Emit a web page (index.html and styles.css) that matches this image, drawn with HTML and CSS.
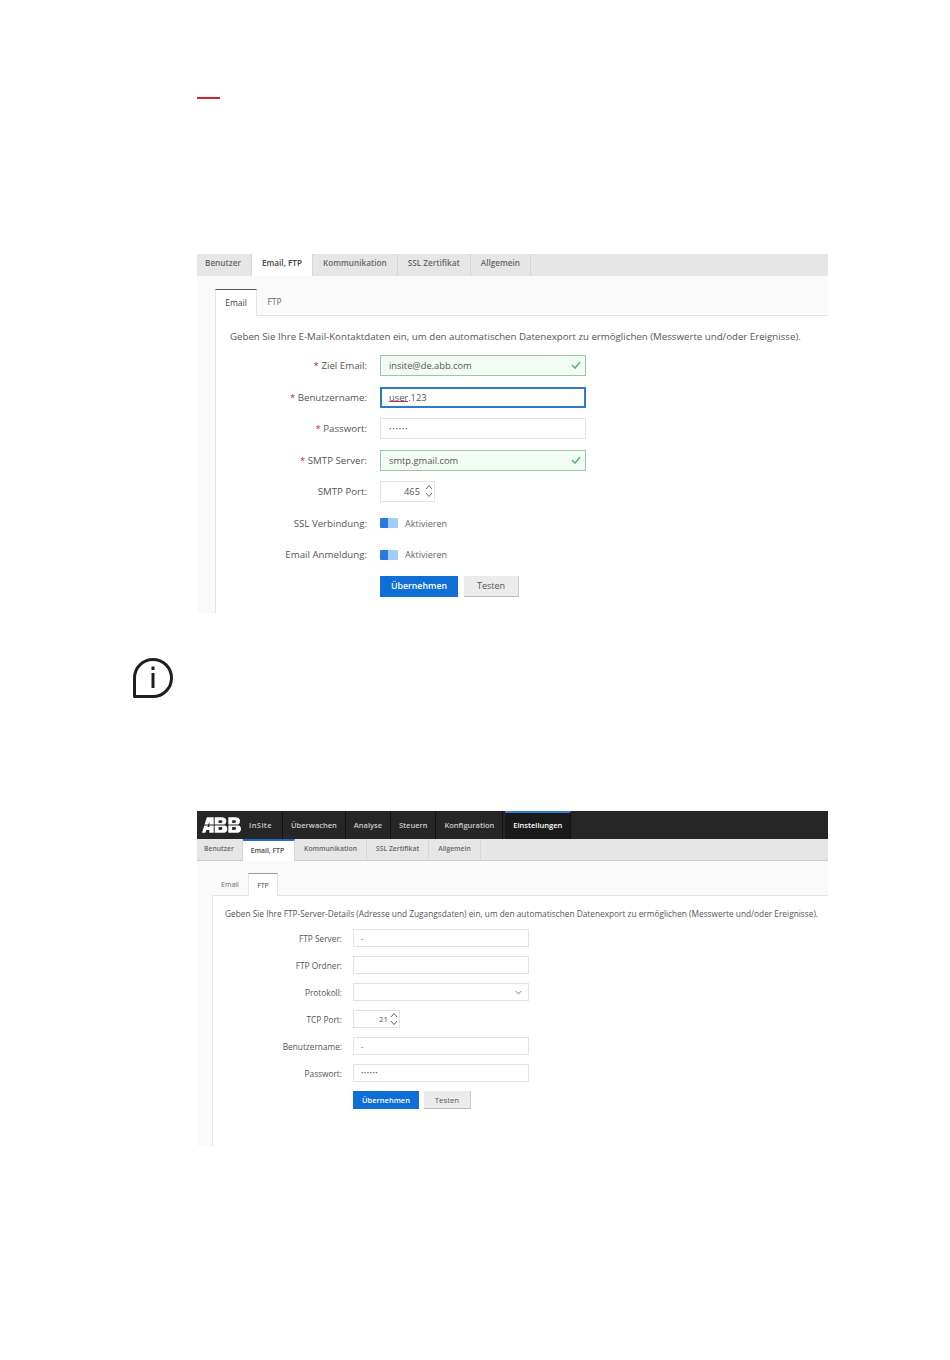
FILE: index.html
```html
<!DOCTYPE html>
<html>
<head>
    <meta charset="UTF-8">
    <title>Email, FTP Einstellungen</title>
    <link rel="stylesheet" href="styles.css">
</head>
<body>
    <div class="red-mark"></div>

    <!-- Email Einstellungen -->
    <div class="panel panel-email">
        <div class="tabs">
            <div class="tab">Benutzer</div>
            <div class="tab active">Email, FTP</div>
            <div class="tab">Kommunikation</div>
            <div class="tab">SSL Zertifikat</div>
            <div class="tab">Allgemein</div>
        </div>
        <div class="panel-body">
            <div class="sub-tabs">
                <div class="sub-tab active">Email</div>
                <div class="sub-tab">FTP</div>
            </div>
            <div class="content">
                <p class="intro">Geben Sie Ihre E-Mail-Kontaktdaten ein, um den automatischen Datenexport zu ermöglichen (Messwerte und/oder Ereignisse).</p>
                <div class="form">
                    <label class="label"><span class="req">*</span> Ziel Email:</label>
                    <div class="field valid">
                        <input type="text" value="insite@de.abb.com">
                        <svg class="check" viewBox="0 0 10 8"><path d="M1 4l3 3 5-6" fill="none" stroke="#5fb082" stroke-width="1.6"/></svg>
                    </div>
                    <label class="label"><span class="req">*</span> Benutzername:</label>
                    <div class="field focus">
                        <input type="text" value="user.123">
                        <span class="spell"></span>
                    </div>
                    <label class="label"><span class="req">*</span> Passwort:</label>
                    <div class="field"><input type="text" class="dots" value="••••••"></div>
                    <label class="label"><span class="req">*</span> SMTP Server:</label>
                    <div class="field valid">
                        <input type="text" value="smtp.gmail.com">
                        <svg class="check" viewBox="0 0 10 8"><path d="M1 4l3 3 5-6" fill="none" stroke="#5fb082" stroke-width="1.6"/></svg>
                    </div>
                    <label class="label">SMTP Port:</label>
                    <div class="field port">
                        <input type="text" value="465">
                        <svg class="spin" viewBox="0 0 8 14"><path d="M1 5l3-3.500 3 3.500M1 9l3 3.500 3-3.500" fill="none" stroke="#666" stroke-width="1"/></svg>
                    </div>
                    <label class="label">SSL Verbindung:</label>
                    <div class="toggle-row"><span class="toggle"></span>Aktivieren</div>
                    <label class="label">Email Anmeldung:</label>
                    <div class="toggle-row"><span class="toggle"></span>Aktivieren</div>
                    <div class="buttons">
                        <button class="btn primary">Übernehmen</button>
                        <button class="btn">Testen</button>
                    </div>
                </div>
            </div>
        </div>
    </div>

    <svg class="info-icon" viewBox="0 0 40 40">
        <path d="M1.500 38.500V20a18.500 18.500 0 1 1 18.500 18.500Z" fill="none" stroke="#1f1f1f" stroke-width="3" stroke-linejoin="round"/>
        <rect x="18.500" y="8.500" width="3" height="3.500" fill="#1f1f1f"/>
        <rect x="18.500" y="15" width="3" height="15" fill="#1f1f1f"/>
    </svg>

    <!-- FTP Einstellungen -->
    <div class="panel panel-ftp">
        <div class="topbar">
            <svg class="logo" viewBox="0 0 40 16">
                <path d="M0 16L5 0H12V16H7.500V13H4.500L3.500 16Z M5.500 10H7.500V4.500Z" fill="#fff" fill-rule="evenodd"/>
                <path d="M13 0h7q5 0 5 4 0 2.500-2 4 3 1 3 4 0 4-5 4h-8Z M17 3v3h2q2 0 2-1.500T19 3Z M17 10v3h2q2 0 2-1.500T19 10Z" fill="#fff" fill-rule="evenodd"/>
                <path d="M27 0h7q5 0 5 4 0 2.500-2 4 3 1 3 4 0 4-5 4h-8Z M31 3v3h2q2 0 2-1.500T33 3Z M31 10v3h2q2 0 2-1.500T33 10Z" fill="#fff" fill-rule="evenodd"/>
                <path d="M0 7.500h40v1H0Z" fill="#262626"/>
            </svg>
            <div class="menu-item first">InSite</div>
            <div class="menu-item">Überwachen</div>
            <div class="menu-item">Analyse</div>
            <div class="menu-item">Steuern</div>
            <div class="menu-item">Konfiguration</div>
            <div class="menu-item active">Einstellungen</div>
        </div>
        <div class="tabs">
            <div class="tab">Benutzer</div>
            <div class="tab active">Email, FTP</div>
            <div class="tab">Kommunikation</div>
            <div class="tab">SSL Zertifikat</div>
            <div class="tab">Allgemein</div>
        </div>
        <div class="panel-body">
            <div class="sub-tabs">
                <div class="sub-tab">Email</div>
                <div class="sub-tab active">FTP</div>
            </div>
            <div class="content">
                <p class="intro">Geben Sie Ihre FTP-Server-Details (Adresse und Zugangsdaten) ein, um den automatischen Datenexport zu ermöglichen (Messwerte und/oder Ereignisse).</p>
                <div class="form">
                    <label class="label">FTP Server:</label>
                    <div class="field"><input type="text" value="-"></div>
                    <label class="label">FTP Ordner:</label>
                    <div class="field"><input type="text" value=""></div>
                    <label class="label">Protokoll:</label>
                    <div class="field">
                        <input type="text" value="">
                        <svg class="chevron" viewBox="0 0 8 5"><path d="M1 1l3 3 3-3" fill="none" stroke="#666" stroke-width="1"/></svg>
                    </div>
                    <label class="label">TCP Port:</label>
                    <div class="field port">
                        <input type="text" value="21">
                        <svg class="spin" viewBox="0 0 8 14"><path d="M1 5l3-3.500 3 3.500M1 9l3 3.500 3-3.500" fill="none" stroke="#666" stroke-width="1"/></svg>
                    </div>
                    <label class="label">Benutzername:</label>
                    <div class="field"><input type="text" value="-"></div>
                    <label class="label">Passwort:</label>
                    <div class="field"><input type="text" class="dots" value="••••••"></div>
                    <div class="buttons">
                        <button class="btn primary">Übernehmen</button>
                        <button class="btn">Testen</button>
                    </div>
                </div>
            </div>
        </div>
    </div>
</body>
</html>
```

FILE: styles.css
```css
body {
    font-family: "Open Sans", "Liberation Sans", sans-serif;
    margin: 0;
    background: white;
    color: #555;
    height: 1360px;
    overflow: hidden;
}
.red-mark {
    width: 23px;
    height: 2px;
    margin: 97px 0 0 197px;
    background: #d9202e;
}
.panel {
    width: 631px;
    margin-left: 197px;
}
.panel-email {
    margin-top: 155px;
    height: 359px;
}
.panel-ftp {
    margin-top: 113px;
    height: 335px;
}
.info-icon {
    display: block;
    width: 40px;
    height: 40px;
    margin: 45px 0 0 133px;
}

/* top bar */
.topbar {
    display: flex;
    height: 28px;
    background: #262626;
    align-items: stretch;
}
.logo {
    width: 39px;
    height: 16px;
    margin: 6px 0 0 5px;
}
.menu-item {
    display: flex;
    align-items: center;
    padding: 0 8px;
    font-size: 7.500px;
    font-weight: 600;
    color: #ccc;
    border-right: 1px solid #111;
}
.menu-item.first {
    letter-spacing: .4px;
    padding-right: 10px;
}
.menu-item.active {
    color: white;
    background: #1a1a1a;
    border-top: 2px solid #2f7fd3;
    padding-bottom: 2px;
    margin-left: 2px;
}

/* tabs */
.tabs {
    display: flex;
    background: #e6e6e6;
    box-sizing: border-box;
    height: 22px;
}
.tab {
    display: flex;
    align-items: center;
    box-sizing: border-box;
    border-right: 1px solid #d6d6d6;
    font-weight: 600;
    color: #666;
}
.tab.active {
    background: white;
    color: #444;
}
.panel-email .tab {
    font-size: 8.200px;
    padding: 0 10px 5px;
}
.panel-email .tab:first-child {
    padding-left: 8px;
}
.panel-ftp .tabs {
    border-bottom: 1px solid #ccc;
}
.panel-ftp .tab {
    font-size: 6.800px;
    padding: 0 9px 3px;
}
.panel-ftp .tab:first-child {
    padding: 0 8px 3px 7px;
}
.panel-ftp .tab.active {
    height: 22px;
    border-top: 2px solid #1f6fc4;
    padding: 0 10px 1px 8px;
}

/* body with light strip on the left */
.panel-body {
    display: flex;
    flex-direction: column;
    background: #fafafa;
    box-sizing: border-box;
}
.panel-email .panel-body {
    height: 337px;
    padding: 13px 0 0 18px;
}
.panel-ftp .panel-body {
    height: 285px;
    padding: 12px 0 0 15px;
}
.sub-tabs {
    display: flex;
    box-sizing: border-box;
    border-bottom: 1px solid #e4e4e4;
}
.sub-tab {
    display: flex;
    align-items: center;
    justify-content: center;
    box-sizing: border-box;
    color: #666;
}
.sub-tab.active {
    background: white;
    color: #444;
    margin-bottom: -1px;
    border-top: 1px solid #555;
    border-left: 1px solid #e4e4e4;
    border-right: 1px solid #e4e4e4;
}
.panel-email .sub-tabs {
    height: 27px;
    font-size: 8.500px;
}
.panel-email .sub-tab {
    width: 35px;
    padding-bottom: 2px;
}
.panel-email .sub-tab.active {
    width: 42px;
}
.panel-ftp .sub-tabs {
    height: 23px;
    font-size: 7px;
}
.panel-ftp .sub-tab {
    width: 36px;
}
.panel-ftp .sub-tab.active {
    width: 30px;
    border-top-color: #999;
}
.content {
    flex: 1;
    background: white;
    border-left: 1px solid #e4e4e4;
}
.intro {
    margin: 0;
    white-space: nowrap;
}
.panel-email .intro {
    padding: 14px 0 0 14px;
    font-size: 9.700px;
    line-height: 13px;
}
.panel-ftp .intro {
    padding: 11px 0 0 12px;
    font-size: 8.300px;
    line-height: 13px;
}

/* form grid */
.form {
    display: grid;
    align-items: center;
}
.panel-email .form {
    grid-template-columns: 151px 206px;
    grid-auto-rows: 21px;
    row-gap: 10.500px;
    column-gap: 13px;
    margin-top: 12px;
    font-size: 9.700px;
}
.panel-ftp .form {
    grid-template-columns: 129px 176px;
    grid-auto-rows: 18px;
    row-gap: 9px;
    column-gap: 11px;
    margin-top: 9px;
    font-size: 8.300px;
}
.label {
    text-align: right;
    color: #555;
}
.req {
    color: #d9202e;
}
.field {
    position: relative;
    height: 100%;
}
.field input {
    width: 100%;
    height: 100%;
    box-sizing: border-box;
    border: 1px solid #e2e2e2;
    background: white;
    color: #555;
    font: inherit;
    margin: 0;
    outline: none;
}
.panel-email .field input {
    padding: 0 8px;
    font-size: 9.300px;
}
.panel-ftp .field input {
    padding: 0 7px;
    font-size: 7.800px;
}
.panel-email .field input.dots {
    font-size: 6px;
    letter-spacing: 1px;
}
.panel-ftp .field input.dots {
    font-size: 6px;
    letter-spacing: .6px;
}
.field.valid input {
    background: #f3fbf5;
    border-color: #9cc4ab;
}
.panel-email .field.focus input {
    border: 2px solid #2a7cc9;
    padding: 0 7px;
}
.spell {
    position: absolute;
    left: 9px;
    top: 14px;
    width: 19px;
    border-bottom: 1px solid #c0304a;
}
.check {
    position: absolute;
    right: 5px;
    top: 6px;
    width: 10px;
    height: 8px;
}
.chevron {
    position: absolute;
    right: 7px;
    top: 7px;
    width: 7px;
    height: 5px;
}
.field.port {
    width: 55px;
}
.panel-ftp .field.port {
    width: 47px;
}
.panel-email .field.port input {
    text-align: right;
    padding-right: 14px;
}
.panel-ftp .field.port input {
    text-align: right;
    padding-right: 11px;
}
.spin {
    position: absolute;
    right: 2px;
    top: 3px;
    width: 8px;
    height: 14px;
}
.panel-ftp .spin {
    top: 2px;
}
.toggle-row {
    display: flex;
    align-items: center;
    gap: 7px;
    font-size: 9px;
    color: #666;
}
.toggle {
    width: 18px;
    height: 10px;
    border-radius: 1px;
    background: linear-gradient(to right, #2a78e0 8px, #a3cdf8 8px);
}
.buttons {
    grid-column: 2;
    display: flex;
    height: 100%;
}
.btn {
    font: inherit;
    margin: 0;
    padding: 0;
    background: #ebebeb;
    border: none;
    border-bottom: 1px solid #bbb;
    border-right: 1px solid #ccc;
    color: #555;
}
.btn.primary {
    background: #0f6fd6;
    border: none;
    color: white;
    font-weight: 600;
}
.panel-email .btn {
    width: 55px;
    margin-left: 6px;
    font-size: 9px;
}
.panel-email .btn.primary {
    width: 78px;
    margin-left: 0;
    font-size: 8.800px;
}
.panel-ftp .btn {
    width: 47px;
    margin-left: 5px;
    font-size: 7.800px;
}
.panel-ftp .btn.primary {
    width: 66px;
    margin-left: 0;
    font-size: 7.500px;
}
```
